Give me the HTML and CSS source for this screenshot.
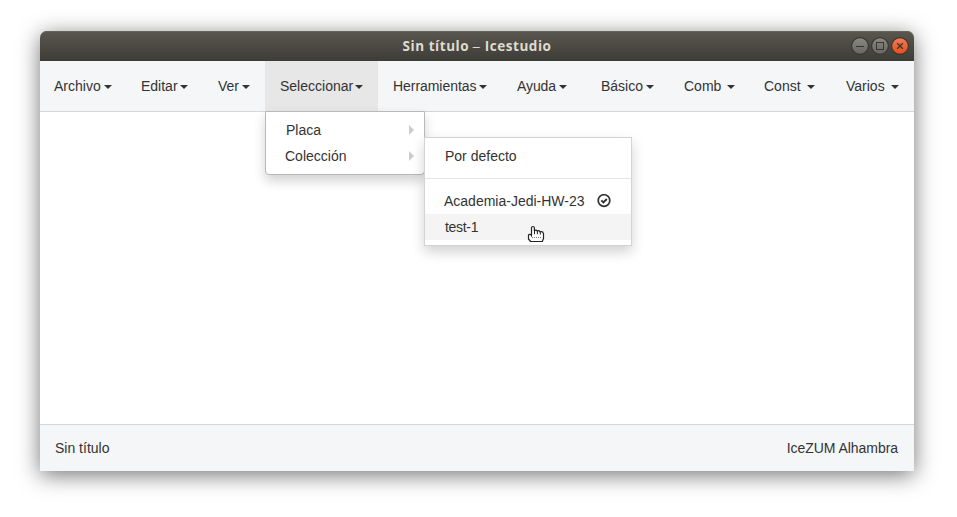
FILE: index.html
```html
<!DOCTYPE html>
<html lang="es">
<head>
<meta charset="utf-8">
<title>Sin título – Icestudio</title>
<link rel="stylesheet" href="styles.css">
</head>
<body>
<div class="window">
  <header class="titlebar">
    <h1 class="title">Sin título <span class="dash">–</span> Icestudio</h1>
    <svg class="controls" width="60" height="20" viewBox="0 0 60 20">
      <defs>
        <linearGradient id="grey" x1="0" y1="0" x2="0" y2="1"><stop offset="0" stop-color="#8b8a82"/><stop offset="1" stop-color="#66655e"/></linearGradient>
        <linearGradient id="red" x1="0" y1="0" x2="0" y2="1"><stop offset="0" stop-color="#f27d55"/><stop offset="1" stop-color="#e44d1c"/></linearGradient>
      </defs>
      <g stroke="#36352f" stroke-width="1.1">
        <circle cx="10" cy="10" r="8.4" fill="url(#grey)"/>
        <circle cx="30" cy="10" r="8.4" fill="url(#grey)"/>
        <circle cx="50" cy="10" r="8.4" fill="url(#red)"/>
      </g>
      <g fill="none" stroke="#383731" stroke-width="1">
        <path d="M6 10.5h8"/>
        <rect x="26.5" y="6.5" width="7" height="7"/>
        <path d="M47.2 7.2l5.6 5.6M52.8 7.2l-5.6 5.6" stroke-width="1.4"/>
      </g>
    </svg>
  </header>
  <nav class="menubar">
    <ul class="menu">
      <li class="item archivo"><span>Archivo</span><i class="caret"></i></li>
      <li class="item editar"><span>Editar</span><i class="caret"></i></li>
      <li class="item ver"><span>Ver</span><i class="caret"></i></li>
      <li class="item seleccionar open"><span>Seleccionar</span><i class="caret"></i>
        <ul class="dropdown">
          <li class="option"><span>Placa</span><i class="arrow"></i></li>
          <li class="option coleccion"><span>Colección</span><i class="arrow"></i>
            <ul class="dropdown submenu">
              <li class="option"><span class="defecto">Por defecto</span></li>
              <li class="divider"></li>
              <li class="option academia"><span>Academia-Jedi-HW-23</span>
                <svg class="check" width="14" height="14" viewBox="0 0 14 14" fill="none" stroke="#333"><circle cx="7" cy="6.5" r="5.8" stroke-width="1.7"/><path d="M4.3 6.4l2.1 2 3.4-3.4" stroke-width="2"/></svg>
              </li>
              <li class="option hover"><span class="test">test-1</span>
                <svg class="pointer" width="18" height="18" viewBox="0 0 18 18"><path d="M4.5 10V2.9Q4.5 1.5 5.9 1.5T7.4 2.9V5.8Q9 4.6 10.3 6 11.9 5.2 13.1 6.8 16 6.2 16.5 8.6V13.5L15.3 16.5H3.6L1.5 14V9.9Q2.6 8.6 4.5 10Z" fill="#fff" stroke="#222" stroke-width="1.2" stroke-linejoin="round"/><path d="M7.5 5.8v3.4M10.4 6v3.2M13.3 6.8v2.8M4.5 9.5v2.2" stroke="#222"/><path d="M5 12.5h10" stroke="#777" stroke-dasharray="1 1"/></svg>
              </li>
            </ul>
          </li>
        </ul>
      </li>
      <li class="item herramientas"><span>Herramientas</span><i class="caret"></i></li>
      <li class="item ayuda"><span>Ayuda</span><i class="caret"></i></li>
    </ul>
    <ul class="menu">
      <li class="item basico"><span>Básico</span><i class="caret"></i></li>
      <li class="item comb"><span>Comb</span><i class="caret"></i></li>
      <li class="item const"><span>Const</span><i class="caret"></i></li>
      <li class="item varios"><span>Varios</span><i class="caret"></i></li>
    </ul>
  </nav>
  <main class="canvas"></main>
  <footer class="statusbar"><span>Sin título</span><span class="board">IceZUM Alhambra</span></footer>
</div>
</body>
</html>
```
FILE: styles.css
```css
* { box-sizing: border-box; }
body {
  margin: 0;
  padding: 31px 43px 46px 40px;
  height: 517px;
  overflow: hidden;
  background: #fff;
  color: #333;
  font: 14px/20px "Liberation Sans", Arial, sans-serif;
}
ul { list-style: none; margin: 0; padding: 0; }
.window {
  display: flex;
  flex-direction: column;
  height: 440px;
  background: #fff;
  border-radius: 7px 7px 0 0;
  box-shadow: 0 4px 22px rgba(0, 0, 0, .55);
}
.titlebar {
  display: grid;
  grid-template-columns: 64px 1fr 64px;
  align-items: center;
  height: 30px;
  border-radius: 7px 7px 0 0;
  background: linear-gradient(#59574e, #3e3c37);
  box-shadow: inset 0 1px #66655b;
}
.title {
  grid-column: 2;
  margin: 0;
  text-align: center;
  color: #dfdbd2;
  font: bold 13.5px/20px "Open Sans", "Noto Sans", sans-serif;
  letter-spacing: .56px;
}
.dash {
  display: inline-block;
  font-weight: 400;
  transform: scaleX(1.25);
}
.menubar {
  display: flex;
  justify-content: space-between;
  height: 51px;
  background: #f5f6f8;
  border-bottom: 1px solid #d3d8db;
}
.menu { display: flex; }
.item {
  position: relative;
  display: flex;
  align-items: center;
  justify-content: space-between;
  height: 50px;
  padding: 0 15px;
  white-space: nowrap;
}
.archivo { width: 87px; padding-left: 14px; }
.editar { width: 76px; padding-left: 14px; }
.ver { width: 62px; }
.seleccionar { width: 113px; }
.herramientas { width: 124px; letter-spacing: -.05px; }
.ayuda { width: 80px; letter-spacing: -.1px; }
.basico { width: 83px; }
.comb { width: 81px; }
.const { width: 80px; padding-left: 14px; }
.varios { width: 84px; padding-left: 16px; }
.open { background: #e7e7e7; }
.caret {
  border: 4px solid transparent;
  border-top-color: #333;
  border-bottom: 0;
  margin-top: 1px;
}
.dropdown {
  position: absolute;
  z-index: 2;
  top: 50px;
  left: 0;
  width: 160px;
  padding: 5px 0;
  background: #fff;
  border: 1px solid #b9b9b9;
  border-radius: 0 0 4px 4px;
  box-shadow: 0 6px 12px rgba(0, 0, 0, .18);
}
.option {
  position: relative;
  display: flex;
  align-items: center;
  height: 26px;
  padding: 0 10px 0 20px;
}
.coleccion, .academia { padding-left: 19px; }
.test { letter-spacing: -.3px; }
.arrow {
  margin-left: auto;
  border: 5px solid transparent;
  border-left-color: #ccc;
  border-right: 0;
}
.submenu {
  top: -6px;
  left: 158px;
  width: 208px;
  border-color: #d3d3d3;
  border-radius: 0;
}
.divider { height: 1px; margin: 9px 0; background: #e5e5e5; }
.hover { background: #f4f4f4; }
.check { margin-left: auto; margin-right: 10px; }
.pointer { position: absolute; left: 102px; top: 11px; }
.canvas { flex: 1; }
.statusbar {
  display: flex;
  justify-content: space-between;
  align-items: center;
  height: 47px;
  padding: 0 16px 0 15px;
  background: #f5f6f8;
  border-top: 1px solid #d3d8db;
}
.board { letter-spacing: -.05px; }
```
